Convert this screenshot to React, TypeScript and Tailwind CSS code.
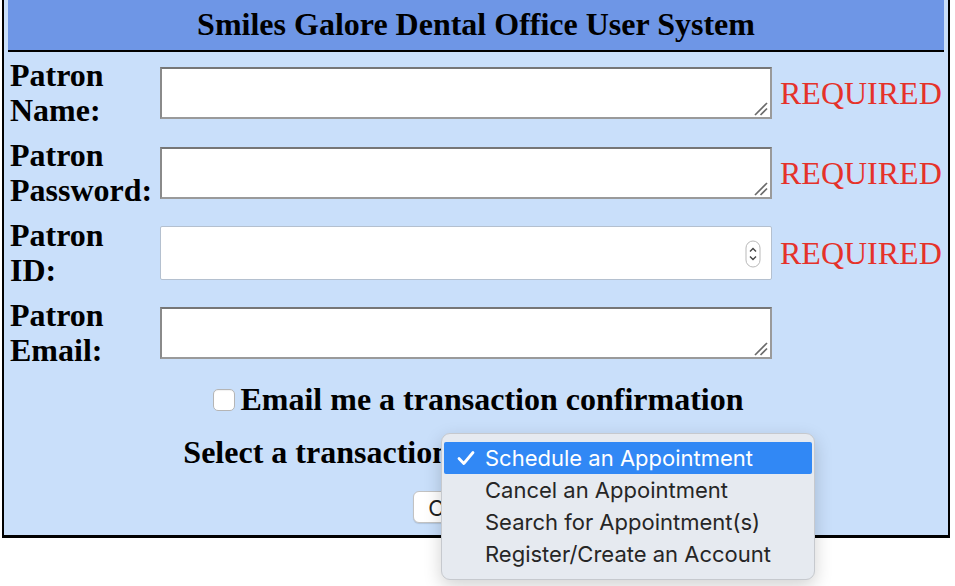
import React from "react";

const serif = "font-['Liberation_Serif','Times_New_Roman',serif]";
const sans = "font-['Inter','Liberation_Sans',sans-serif]";

function TextBox() {
  return (
    <div className="relative">
      <textarea
        className="block w-[612px] h-[52px] bg-white border-2 border-[#9a9a9a] border-t-[#767676] border-l-[#8a8a8a] outline-none resize-none"
        rows={2}
      />
      <svg className="absolute right-[4px] bottom-[3px]" width="14" height="14" viewBox="0 0 14 14">
        <path d="M1 13 L13 1" stroke="#6b6b6b" strokeWidth="1.7" />
        <path d="M6.5 13 L13 6.5" stroke="#6b6b6b" strokeWidth="1.7" />
      </svg>
    </div>
  );
}

function NumberBox() {
  return (
    <div className="relative w-[612px] h-[54px] bg-white border border-[#b4c0cf] rounded-[2px]">
      <svg className="absolute right-[10px] top-[13px]" width="16" height="28" viewBox="0 0 16 28">
        <rect x="1" y="1" width="14" height="26" rx="7" fill="#fff" stroke="#b9b9b9" />
        <path d="M5 11.5 L8 8.5 L11 11.5" fill="none" stroke="#444" strokeWidth="1.4" />
        <path d="M5 16.5 L8 19.5 L11 16.5" fill="none" stroke="#444" strokeWidth="1.4" />
      </svg>
    </div>
  );
}

function Row({
  label,
  field,
  required,
}: {
  label: [string, string];
  field: React.ReactNode;
  required?: boolean;
}) {
  return (
    <div className="flex items-center h-[70px]">
      <div className="w-[150px] pl-[2px] font-bold leading-[35px]">
        {label[0]}
        <br />
        {label[1]}
      </div>
      <div className="ml-[2px]">{field}</div>
      {required && (
        <div className="ml-[8px] text-[#e5322a] font-normal leading-[35px]">REQUIRED</div>
      )}
    </div>
  );
}

const options = [
  "Schedule an Appointment",
  "Cancel an Appointment",
  "Search for Appointment(s)",
  "Register/Create an Account",
];

export default function App() {
  return (
    <div className={`relative w-[955px] h-[586px] bg-white text-black ${serif} text-[32px]`}>
      <div className="ml-[2px] w-[948px] border-x-2 border-b-[3px] border-black bg-[#c9dffa] px-[4px]">
        <div className="h-[52px] bg-[#6e96e6] border-b-2 border-black flex items-center justify-center">
          <h1 className="font-bold text-[32px] leading-none pb-[2px]">
            Smiles Galore Dental Office User System
          </h1>
        </div>

        <div className="pt-[6px] flex flex-col gap-[10px]">
          <Row label={["Patron", "Name:"]} field={<TextBox />} required />
          <Row label={["Patron", "Password:"]} field={<TextBox />} required />
          <Row label={["Patron", "ID:"]} field={<NumberBox />} required />
          <Row label={["Patron", "Email:"]} field={<TextBox />} />
        </div>

        <div className="mt-[14px] flex items-center justify-center h-[35px] pl-[5px]">
          <span className="w-[22px] h-[22px] rounded-[5px] bg-white border border-[#b5b5b5] shadow-[inset_0_1px_1px_rgba(0,0,0,0.06)] mr-[5px]" />
          <span className="font-bold leading-[35px]">Email me a transaction confirmation</span>
        </div>

        <div className="mt-[18px] flex items-center justify-center h-[35px]">
          <span className="font-bold leading-[35px]">Select a transaction:</span>
          <span className="ml-[8px] w-[300px] h-[30px] rounded-[6px] bg-white border border-[#b5b5b5]" />
        </div>

        <div className="mt-[21px] pb-[12px] flex justify-center">
          <button className={`h-[32px] px-[14px] ml-[-2px] rounded-[6px] bg-white border border-[#c2c2c2] shadow-[0_1px_1px_rgba(0,0,0,0.12)] text-[22px] ${sans} text-[#1f1f1f]`}>
            Continue
          </button>
        </div>
      </div>

      <div className={`absolute left-[441px] top-[433px] w-[374px] h-[147px] rounded-[9px] bg-[#e6eaf0] border border-[#c6c9ce] shadow-[0_6px_18px_rgba(0,0,0,0.18)] py-[8px] px-[2px] ${sans} text-[22px] text-[#262626]`}>
        {options.map((o, i) => (
          <div
            key={o}
            className={`h-[32px] flex items-center rounded-[2px] ${i === 0 ? "bg-[#3188f5] text-white" : ""}`}
          >
            <span className="w-[41px] flex justify-center pl-[2px]">
              {i === 0 && (
                <svg width="18" height="16" viewBox="0 0 18 16">
                  <path d="M2 8.5 L6.8 13.5 L16 2.5" fill="none" stroke="white" strokeWidth="2.8" strokeLinecap="round" strokeLinejoin="round" />
                </svg>
              )}
            </span>
            <span className="leading-none">{o}</span>
          </div>
        ))}
      </div>
    </div>
  );
}
